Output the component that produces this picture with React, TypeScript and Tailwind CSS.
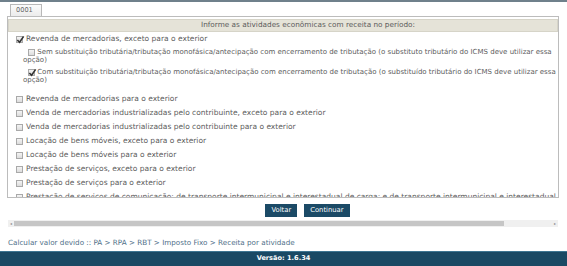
import React from "react";

function Check({ checked }: { checked?: boolean }) {
  return (
    <span className="inline-flex shrink-0 items-center justify-center w-[7px] h-[7px] border border-[#a9a9a9] bg-gradient-to-b from-[#f4f4f4] to-[#dcdcdc] align-middle relative">
      {checked && (
        <svg viewBox="0 0 10 10" className="absolute -left-[1px] -top-[2px] w-[9px] h-[9px]">
          <path d="M1.5 5.5 L4 8 L8.5 1.5" fill="none" stroke="#333" strokeWidth={1.8} />
        </svg>
      )}
    </span>
  );
}

const activities = [
  "Revenda de mercadorias para o exterior",
  "Venda de mercadorias industrializadas pelo contribuinte, exceto para o exterior",
  "Venda de mercadorias industrializadas pelo contribuinte para o exterior",
  "Locação de bens móveis, exceto para o exterior",
  "Locação de bens móveis para o exterior",
  "Prestação de serviços, exceto para o exterior",
  "Prestação de serviços para o exterior",
  "Prestação de serviços de comunicação; de transporte intermunicipal e interestadual de carga; e de transporte intermunicipal e interestadual de passageiros",
];

export default function App() {
  return (
    <div className="w-[567px] h-[266px] bg-white overflow-hidden flex flex-col font-['DejaVu_Sans',sans-serif] text-[7.5px] text-[#5c5c5c]">
      <div className="h-[2px] bg-[#6f808b]" />

      <div className="pl-[10px] pt-[2px] h-[14px]">
        <div className="w-[32px] h-[12px] border border-b-0 border-[#b8b8b8] bg-gradient-to-b from-[#fbfbfb] to-[#ececec] flex items-center pl-[5px] text-[6.6px] text-[#666]">
          0001
        </div>
      </div>

      <div className="ml-[7px] w-[552px] h-[182px] border border-[#bcbcbc] overflow-hidden">
        <div className="mt-[2px] h-[13px] bg-[#e5e3d8] border border-[#d6d4c8] flex items-center pl-[192px] text-[7.3px]">
          Informe as atividades econômicas com receita no período:
        </div>

        <div className="pl-[8px]">
          <div className="h-[14px] flex items-center gap-[3px]">
            <Check checked />
            <span>Revenda de mercadorias, exceto para o exterior</span>
          </div>

          <div className="mt-[2px] pl-[7px] leading-[8px] indent-[5px] text-[7px]">
            <Check /> Sem substituição tributária/tributação monofásica/antecipação com encerramento de tributação (o substituto tributário do ICMS deve utilizar essa opção)
          </div>
          <div className="mt-[4px] pl-[7px] leading-[8px] indent-[5px] text-[7px]">
            <Check checked /> Com substituição tributária/tributação monofásica/antecipação com encerramento de tributação (o substituído tributário do ICMS deve utilizar essa opção)
          </div>

          <div className="mt-[8px]">
            {activities.map((a) => (
              <div key={a} className="h-[14px] flex items-center gap-[3px] whitespace-nowrap">
                <Check />
                <span>{a}</span>
              </div>
            ))}
          </div>
        </div>
      </div>

      <div className="mt-[6px] flex justify-center gap-[7px] pl-[48px]">
        <button className="h-[13px] px-[6px] bg-[#1b4a66] text-white text-[6.8px]">Voltar</button>
        <button className="h-[13px] px-[6px] bg-[#1b4a66] text-white text-[6.8px]">Continuar</button>
      </div>

      <div className="mt-[3px] ml-[8px] w-[550px] h-[7px] bg-[#f0f0f0] flex items-center">
        <span className="w-[6px] text-[4px] text-[#888] text-center">◂</span>
        <div className="h-[5px] w-[490px] bg-[#c6c6c6]" />
        <div className="flex-1" />
        <span className="w-[6px] text-[4px] text-[#888] text-center">▸</span>
      </div>

      <div className="mt-[10px] pl-[8px] h-[12px] flex items-center text-[#4f7089] text-[7.2px]">
        Calcular valor devido :: PA &gt; RPA &gt; RBT &gt; Imposto Fixo &gt; Receita por atividade
      </div>

      <div className="mt-[2px] flex-1 bg-[#1a4964] border-t border-[#3d7592] flex items-center justify-center text-white font-bold text-[6.6px]">
        Versão: 1.6.34
      </div>
    </div>
  );
}
